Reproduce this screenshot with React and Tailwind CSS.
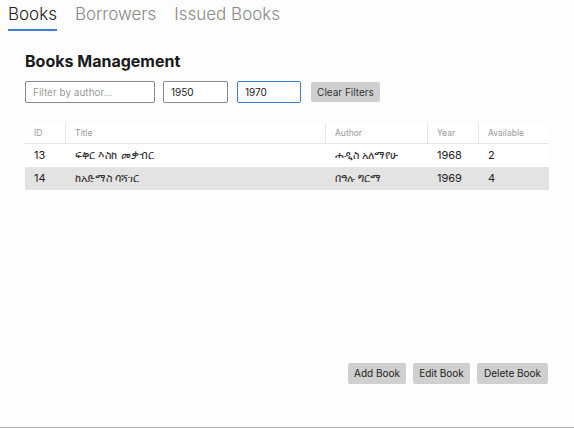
import React from "react";

const rows = [
  { id: "13", title: "ፍቅር እስከ መቃብር", author: "ሐዲስ አለማየሁ", year: "1968", avail: "2" },
  { id: "14", title: "ከአድማስ ባሻገር", author: "በዓሉ ግርማ", year: "1969", avail: "4" },
];

export default function App() {
  return (
    <div className="w-[574px] h-[428px] bg-[#fdfdfd] flex flex-col font-['Inter',sans-serif] text-[#1a1a1a]">
      <div className="flex pl-[8px] pt-[3px] gap-[18px] text-[17px] leading-[22px] font-light">
        <div className="flex flex-col">
          <span className="text-[#222]">Books</span>
          <div className="h-[2px] bg-[#3b7fd4] mt-[4px]"></div>
        </div>
        <span className="text-[#8a8a8a]">Borrowers</span>
        <span className="text-[#8a8a8a]">Issued Books</span>
      </div>
      <div className="flex-1 flex flex-col px-[25px]">
        <div className="mt-[20px] text-[16px] font-bold leading-[20px]">Books Management</div>
        <div className="flex items-center mt-[10px] text-[10px]">
          <input
            className="w-[130px] h-[22px] border border-[#8a8a8a] rounded-[2px] px-[7px] bg-white placeholder:text-[#9a9a9a] outline-none"
            placeholder="Filter by author..."
          />
          <input
            className="ml-[8px] w-[65px] h-[22px] border border-[#8a8a8a] rounded-[2px] px-[7px] bg-white outline-none"
            defaultValue="1950"
          />
          <input
            className="ml-[9px] w-[64px] h-[22px] border border-[#3b7fd4] rounded-[2px] px-[7px] bg-white outline-none"
            defaultValue="1970"
          />
          <button className="ml-[10px] w-[69px] h-[20px] bg-[#cfcfcf] rounded-[2px] text-[10px] text-[#333]">
            Clear Filters
          </button>
        </div>
        <div className="mt-[20px] w-[524px] bg-white">
          <div className="flex h-[21px] items-center text-[8.5px] text-[#999] border-b border-[#e6e6e6]">
            <div className="w-[40px] pl-[9px]">ID</div>
            <div className="w-[260px] pl-[9px] border-l border-[#e6e6e6] h-full flex items-center">Title</div>
            <div className="w-[102px] pl-[9px] border-l border-[#e6e6e6] h-full flex items-center">Author</div>
            <div className="w-[51px] pl-[9px] border-l border-[#e6e6e6] h-full flex items-center">Year</div>
            <div className="w-[71px] pl-[9px] border-l border-[#e6e6e6] h-full flex items-center">Available</div>
          </div>
          {rows.map((r, i) => (
            <div
              key={r.id}
              className={`flex h-[23px] items-center text-[11px] text-[#222] ${i === 1 ? "bg-[#e3e3e3]" : "bg-white"}`}
            >
              <div className="w-[40px] pl-[9px]">{r.id}</div>
              <div className="w-[260px] pl-[10px] text-[10.5px] text-[#333] font-['DejaVu_Sans',sans-serif]">{r.title}</div>
              <div className="w-[102px] pl-[10px] text-[10.5px] text-[#333] font-['DejaVu_Sans',sans-serif]">{r.author}</div>
              <div className="w-[51px] pl-[10px]">{r.year}</div>
              <div className="w-[71px] pl-[10px]">{r.avail}</div>
            </div>
          ))}
        </div>
        <div className="flex-1"></div>
        <div className="flex justify-end gap-[7px] pr-[1px] mb-[43px] text-[10px] text-[#222]">
          <button className="w-[58px] h-[21px] bg-[#d0d0d0] rounded-[2px]">Add Book</button>
          <button className="w-[57px] h-[21px] bg-[#d0d0d0] rounded-[2px]">Edit Book</button>
          <button className="w-[71px] h-[21px] bg-[#d0d0d0] rounded-[2px]">Delete Book</button>
        </div>
      </div>
      <div className="h-[1px] bg-[#b5b5b5]"></div>
    </div>
  );
}
